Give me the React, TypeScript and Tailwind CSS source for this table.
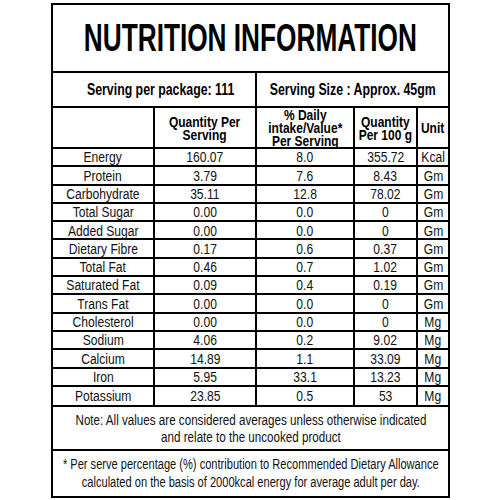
import type { ReactNode } from "react";

const rows: [string, string, string, string, string][] = [
  ["Energy", "160.07", "8.0", "355.72", "Kcal"],
  ["Protein", "3.79", "7.6", "8.43", "Gm"],
  ["Carbohydrate", "35.11", "12.8", "78.02", "Gm"],
  ["Total Sugar", "0.00", "0.0", "0", "Gm"],
  ["Added Sugar", "0.00", "0.0", "0", "Gm"],
  ["Dietary Fibre", "0.17", "0.6", "0.37", "Gm"],
  ["Total Fat", "0.46", "0.7", "1.02", "Gm"],
  ["Saturated Fat", "0.09", "0.4", "0.19", "Gm"],
  ["Trans Fat", "0.00", "0.0", "0", "Gm"],
  ["Cholesterol", "0.00", "0.0", "0", "Mg"],
  ["Sodium", "4.06", "0.2", "9.02", "Mg"],
  ["Calcium", "14.89", "1.1", "33.09", "Mg"],
  ["Iron", "5.95", "33.1", "13.23", "Mg"],
  ["Potassium", "23.85", "0.5", "53", "Mg"],
];

const cell = "border-2 border-black p-0 text-center align-middle overflow-visible";

// condensed look: Arial-width font squeezed horizontally
function Narrow({ children, className = "" }: { children: ReactNode; className?: string }) {
  return (
    <div className="flex justify-center">
      <span className={`inline-block whitespace-nowrap text-center ${className}`}>{children}</span>
    </div>
  );
}

export default function App() {
  return (
    <div
      className="w-[500px] h-[500px] bg-white pt-[3px] pl-[51px] text-black"
      style={{ fontFamily: '"Liberation Sans", Arial, sans-serif' }}
    >
      <table className="w-[397px] table-fixed border-collapse border-2 border-black leading-none">
        <colgroup>
          <col className="w-[102px]" />
          <col className="w-[102px]" />
          <col className="w-[98px]" />
          <col className="w-[63px]" />
          <col className="w-[32px]" />
        </colgroup>
        <tbody>
          <tr className="h-[68px]">
            <td colSpan={5} className={cell}>
              <Narrow className="text-[38px] font-bold scale-x-[0.69]">NUTRITION INFORMATION</Narrow>
            </td>
          </tr>
          <tr className="h-[35px]">
            <td colSpan={2} className={`${cell} pl-[14px]`}>
              <Narrow className="text-[16px] font-bold scale-x-[0.77]">Serving per package: 111</Narrow>
            </td>
            <td colSpan={3} className={cell}>
              <Narrow className="text-[16px] font-bold scale-x-[0.77]">Serving Size : Approx. 45gm</Narrow>
            </td>
          </tr>
          <tr className="h-[41px]">
            <td className={cell}></td>
            <td className={cell}>
              <Narrow className="text-[15px] font-bold leading-[13px] scale-x-[0.8]">
                Quantity Per
                <br />
                Serving
              </Narrow>
            </td>
            <td className={cell}>
              <Narrow className="text-[15px] font-bold leading-[13px] scale-x-[0.8]">
                % Daily
                <br />
                intake/Value*
                <br />
                Per Serving
              </Narrow>
            </td>
            <td className={cell}>
              <Narrow className="text-[15px] font-bold leading-[13px] scale-x-[0.8]">
                Quantity
                <br />
                Per 100 g
              </Narrow>
            </td>
            <td className={cell}>
              <Narrow className="text-[15px] font-bold scale-x-[0.8]">Unit</Narrow>
            </td>
          </tr>
          {rows.map((r, i) => (
            <tr key={r[0]} className={i === rows.length - 1 ? "h-[20px]" : "h-[18.3px]"}>
              {r.map((v, j) => (
                <td key={j} className={cell}>
                  <Narrow className="text-[15.5px] scale-x-[0.78] text-[#111]">{v}</Narrow>
                </td>
              ))}
            </tr>
          ))}
          <tr className="h-[44px]">
            <td colSpan={5} className={cell}>
              <Narrow className="text-[15.5px] leading-[17px] scale-x-[0.75] text-[#111]">
                Note: All values are considered averages unless otherwise indicated
                <br />
                and relate to the uncooked product
              </Narrow>
            </td>
          </tr>
          <tr className="h-[47px]">
            <td colSpan={5} className={cell}>
              <Narrow className="text-[15.5px] leading-[18px] scale-x-[0.715] text-[#111]">
                * Per serve percentage (%) contribution to Recommended Dietary Allowance
                <br />
                calculated on the basis of 2000kcal energy for average adult per day.
              </Narrow>
            </td>
          </tr>
        </tbody>
      </table>
    </div>
  );
}
